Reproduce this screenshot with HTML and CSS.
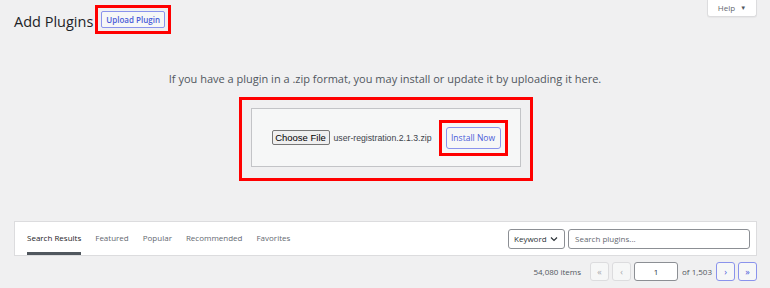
FILE: index.html
```html
<!DOCTYPE html>
<html>
<head>
    <meta name="viewport" content="width=device-width, initial-scale=1.0">
    <title>Add Plugins</title>
    <link rel="stylesheet" href="styles.css">
</head>
<body>
    <div class="header">
        <h1>Add Plugins</h1>
        <div class="mark mark-upload">
            <button class="btn-outline">Upload Plugin</button>
        </div>
        <div class="help-tab">Help <span class="caret">&#9660;</span></div>
    </div>

    <p class="intro">If you have a plugin in a .zip format, you may install or update it by uploading it here.</p>

    <div class="upload-wrap">
        <div class="mark mark-box">
            <div class="upload-box">
                <button class="file-btn">Choose File</button>
                <span class="file-name">user-registration.2.1.3.zip</span>
                <div class="mark mark-install">
                    <button class="btn-outline btn-install">Install Now</button>
                </div>
            </div>
        </div>
    </div>

    <div class="filter-bar">
        <ul class="tabs">
            <li class="current">Search Results</li>
            <li>Featured</li>
            <li>Popular</li>
            <li>Recommended</li>
            <li>Favorites</li>
        </ul>
        <div class="search">
            <div class="select">Keyword
                <svg width="8" height="6" viewBox="0 0 8 6"><path d="M1 1.5 L4 4.5 L7 1.5" fill="none" stroke="#2c3338" stroke-width="1.2"/></svg>
            </div>
            <div class="search-input">Search plugins...</div>
        </div>
    </div>

    <div class="pagination">
        <span class="count">54,080 items</span>
        <span class="page-btn disabled">&laquo;</span>
        <span class="page-btn disabled">&lsaquo;</span>
        <span class="page-input">1</span>
        <span class="of">of 1,503</span>
        <span class="page-btn">&rsaquo;</span>
        <span class="page-btn">&raquo;</span>
    </div>
</body>
</html>
```

FILE: styles.css
```css
body {
    font-family: 'Open Sans', 'Liberation Sans', sans-serif;
    margin: 0;
    background: #f0f0f1;
    color: #3c434a;
    width: 770px;
    height: 288px;
    overflow: hidden;
    white-space: nowrap;
}
.header {
    display: flex;
    align-items: flex-start;
    padding-left: 14px;
    padding-right: 13px;
    height: 44px;
}
h1 {
    font-size: 14.5px;
    font-weight: 400;
    color: #1d2327;
    margin: 13px 2px 0 0;
    line-height: 18px;
}
.mark {
    border: 3px solid #ff0000;
    box-sizing: border-box;
    flex-shrink: 0;
}
.mark-upload {
    margin-top: 5px;
    padding: 3px;
}
.btn-outline {
    font-family: inherit;
    background: #f6f7f7;
    color: #4a5bd8;
    border: 1px solid #8a93ec;
    border-radius: 2px;
    font-size: 8px;
    font-weight: 600;
    height: 17px;
    padding: 0 4px;
    line-height: 15px;
    display: block;
}
.help-tab {
    margin-left: auto;
    background: #fff;
    border: 1px solid #dcdcde;
    border-top: 0;
    border-radius: 0 0 3px 3px;
    box-shadow: 0 1px 1px rgba(0,0,0,0.04);
    width: 48px;
    height: 16px;
    font-size: 8px;
    color: #646970;
    text-align: center;
    line-height: 15px;
}
.help-tab .caret {
    font-size: 6px;
    margin-left: 3px;
    position: relative;
    top: -1px;
    color: #50575e;
}
.intro {
    text-align: center;
    font-size: 11px;
    color: #50575e;
    margin: 27px 0 0 0;
    line-height: 16px;
}
.upload-wrap {
    display: flex;
    justify-content: center;
    margin-top: 10px;
    padding-left: 1px;
}
.mark-box {
    width: 294px;
    height: 84px;
    padding: 8px 9px 11px 9px;
}
.upload-box {
    background: #f6f7f7;
    border: 1px solid #c3c4c7;
    height: 59px;
    box-sizing: border-box;
    display: flex;
    align-items: center;
    padding-left: 20px;
}
.file-btn {
    font-family: 'Liberation Sans', Arial, sans-serif;
    font-size: 9.5px;
    background: #efefef;
    border: 1px solid #767676;
    border-radius: 2px;
    color: #000;
    width: 58px;
    height: 15px;
    padding: 0;
    line-height: 13px;
    flex-shrink: 0;
}
.file-name {
    font-family: 'Liberation Sans', Arial, sans-serif;
    font-size: 8.7px;
    color: #3c434a;
    margin-left: 4px;
    width: 98px;
    flex-shrink: 0;
}
.mark-install {
    margin-left: 7px;
    padding: 4px;
    margin-top: 1px;
}
.btn-install {
    font-weight: 400;
    font-size: 8.5px;
    width: 55px;
    height: 22px;
    line-height: 20px;
    padding: 0;
    border-radius: 3px;
}
.filter-bar {
    margin: 40px 13px 0 14px;
    background: #fff;
    border: 1px solid #dcdcde;
    height: 35px;
    box-sizing: border-box;
    display: flex;
    justify-content: space-between;
    align-items: stretch;
}
.tabs {
    list-style: none;
    margin: 0 0 0 12px;
    padding: 0;
    display: flex;
    gap: 14px;
}
.tabs li {
    font-size: 8px;
    color: #646970;
    line-height: 30px;
    padding-top: 1px;
    border-bottom: 3px solid transparent;
}
.tabs li.current {
    color: #1d2327;
    border-bottom-color: #50575e;
}
.search {
    display: flex;
    align-items: center;
    gap: 3px;
    margin-right: 6px;
}
.select {
    border: 1px solid #8c8f94;
    border-radius: 3px;
    height: 20px;
    box-sizing: border-box;
    width: 57px;
    font-size: 8px;
    color: #2c3338;
    display: flex;
    align-items: center;
    gap: 3px;
    padding-left: 5px;
}
.search-input {
    border: 1px solid #8c8f94;
    border-radius: 3px;
    height: 20px;
    width: 182px;
    box-sizing: border-box;
    font-size: 8px;
    color: #646970;
    line-height: 18px;
    padding-left: 6px;
}
.pagination {
    display: flex;
    justify-content: flex-end;
    align-items: center;
    gap: 3px;
    margin: 6px 13px 0 0;
    font-size: 8px;
    color: #50575e;
}
.count {
    margin-right: 6px;
}
.page-btn {
    width: 19px;
    height: 19px;
    box-sizing: border-box;
    border: 1px solid #8a93ec;
    border-radius: 3px;
    background: #f6f7f7;
    color: #4a5bd8;
    display: flex;
    align-items: center;
    justify-content: center;
    font-size: 9px;
}
.page-btn.disabled {
    border-color: #dcdcde;
    color: #a7aaad;
    background: #f6f7f7;
}
.page-input {
    width: 44px;
    height: 19px;
    box-sizing: border-box;
    border: 1px solid #8c8f94;
    border-radius: 3px;
    background: #fff;
    text-align: center;
    line-height: 17px;
    color: #2c3338;
}
.of {
    margin: 0 1px;
}
```
